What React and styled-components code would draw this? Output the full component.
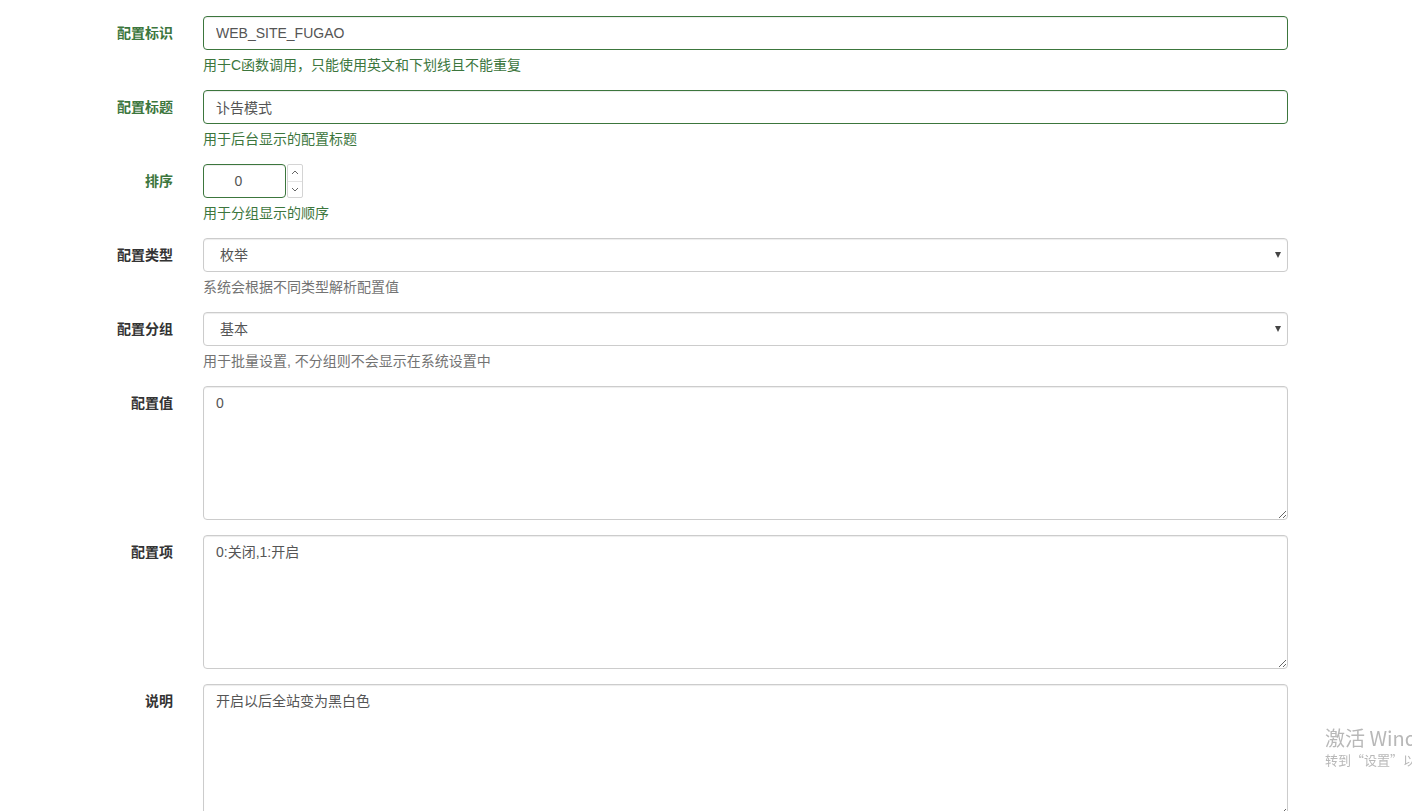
import React from 'react';
import styled, { createGlobalStyle, css } from 'styled-components';

const green = '#3c763d';
const grey = '#737373';
const text = '#555';
const border = '#ccc';

const GlobalStyle = createGlobalStyle`
  html, body {
    margin: 0;
    padding: 0;
    background: #fff;
    overflow: hidden;
  }
  body {
    font-family: "Liberation Sans", "Noto Sans CJK SC", sans-serif;
    font-size: 14px;
    color: #333;
  }
`;

const Page = styled.div`
  padding-top: 16px;
  height: 811px;
  box-sizing: border-box;
`;

const Form = styled.form`
  display: flex;
  flex-direction: column;
  gap: 15px;
`;

const Row = styled.div`
  display: grid;
  grid-template-columns: 173px 1085px;
  column-gap: 30px;
  align-items: start;
`;

const Label = styled.label`
  text-align: right;
  font-weight: 700;
  line-height: 20px;
  padding-top: 7px;
  color: ${({ success }) => (success ? green : '#333')};
`;

const Field = styled.div`
  display: flex;
  flex-direction: column;
`;

const controlBase = css`
  box-sizing: border-box;
  width: 100%;
  border: 1px solid ${({ success }) => (success ? green : border)};
  border-radius: 4px;
  background: #fff;
  color: ${text};
  font-family: "Liberation Sans", "Noto Sans CJK SC", sans-serif;
  font-size: 14px;
  outline: none;
  box-shadow: inset 0 1px 1px rgba(0, 0, 0, 0.075);
`;

const Input = styled.input`
  ${controlBase};
  height: 34px;
  padding: 6px 12px;
  line-height: 20px;
`;

const NumberWrap = styled.div`
  display: flex;
  align-items: stretch;
  gap: 1px;
  height: 34px;
`;

const NumberInput = styled.input`
  ${controlBase};
  width: 83px;
  height: 34px;
  padding: 6px 12px 6px 0;
  text-align: center;
`;

const Spinner = styled.div`
  width: 16px;
  display: flex;
  flex-direction: column;
  border: 1px solid #d4d4d4;
  border-radius: 2px;
  box-sizing: border-box;
  background: #fff;
`;

const SpinHalf = styled.div`
  flex: 1;
  display: flex;
  align-items: center;
  justify-content: center;
  border-top: ${({ bottom }) => (bottom ? '1px solid #e3e3e3' : 'none')};
`;

const SelectBox = styled.div`
  ${controlBase};
  height: 34px;
  padding: 6px 16px;
  line-height: 20px;
  display: flex;
  justify-content: space-between;
  align-items: center;
`;

const Caret = styled.span`
  width: 0;
  height: 0;
  border-left: 3px solid transparent;
  border-right: 3px solid transparent;
  border-top: 6px solid #444;
  margin-right: -10px;
`;

const TextArea = styled.textarea`
  ${controlBase};
  display: block;
  height: 134px;
  padding: 6px 12px;
  line-height: 20px;
  resize: vertical;
`;

const Help = styled.span`
  display: block;
  margin-top: 5px;
  line-height: 20px;
  color: ${({ success }) => (success ? green : grey)};
`;

const Watermark = styled.div`
  position: fixed;
  left: 1325px;
  top: 725px;
  color: #b8b8b8;
  white-space: nowrap;
  font-family: "Noto Sans CJK SC", "Liberation Sans", sans-serif;
`;

const WmTitle = styled.div`
  font-size: 20px;
  line-height: 26px;
`;

const WmSub = styled.div`
  font-size: 13px;
  line-height: 18px;
`;

const Chevron = ({ up }) => (
  <svg width="8" height="5" viewBox="0 0 8 5">
    <path
      d={up ? 'M1 4 L4 1 L7 4' : 'M1 1 L4 4 L7 1'}
      fill="none"
      stroke="#666"
      strokeWidth="1"
    />
  </svg>
);

const App = () => (
  <Page>
    <GlobalStyle />
    <Form>
      <Row>
        <Label success>配置标识</Label>
        <Field>
          <Input success readOnly value="WEB_SITE_FUGAO" />
          <Help success>用于C函数调用，只能使用英文和下划线且不能重复</Help>
        </Field>
      </Row>
      <Row>
        <Label success>配置标题</Label>
        <Field>
          <Input success readOnly value="讣告模式" />
          <Help success>用于后台显示的配置标题</Help>
        </Field>
      </Row>
      <Row>
        <Label success>排序</Label>
        <Field>
          <NumberWrap>
            <NumberInput success readOnly value="0" />
            <Spinner>
              <SpinHalf>
                <Chevron up />
              </SpinHalf>
              <SpinHalf bottom>
                <Chevron />
              </SpinHalf>
            </Spinner>
          </NumberWrap>
          <Help success>用于分组显示的顺序</Help>
        </Field>
      </Row>
      <Row>
        <Label>配置类型</Label>
        <Field>
          <SelectBox>
            枚举
            <Caret />
          </SelectBox>
          <Help>系统会根据不同类型解析配置值</Help>
        </Field>
      </Row>
      <Row>
        <Label>配置分组</Label>
        <Field>
          <SelectBox>
            基本
            <Caret />
          </SelectBox>
          <Help>用于批量设置, 不分组则不会显示在系统设置中</Help>
        </Field>
      </Row>
      <Row>
        <Label>配置值</Label>
        <Field>
          <TextArea readOnly value="0" />
        </Field>
      </Row>
      <Row>
        <Label>配置项</Label>
        <Field>
          <TextArea readOnly value="0:关闭,1:开启" />
        </Field>
      </Row>
      <Row>
        <Label>说明</Label>
        <Field>
          <TextArea readOnly value="开启以后全站变为黑白色" />
        </Field>
      </Row>
    </Form>
    <Watermark>
      <WmTitle>激活 Windows</WmTitle>
      <WmSub>转到“设置”以激活 Windows。</WmSub>
    </Watermark>
  </Page>
);

export default App;
